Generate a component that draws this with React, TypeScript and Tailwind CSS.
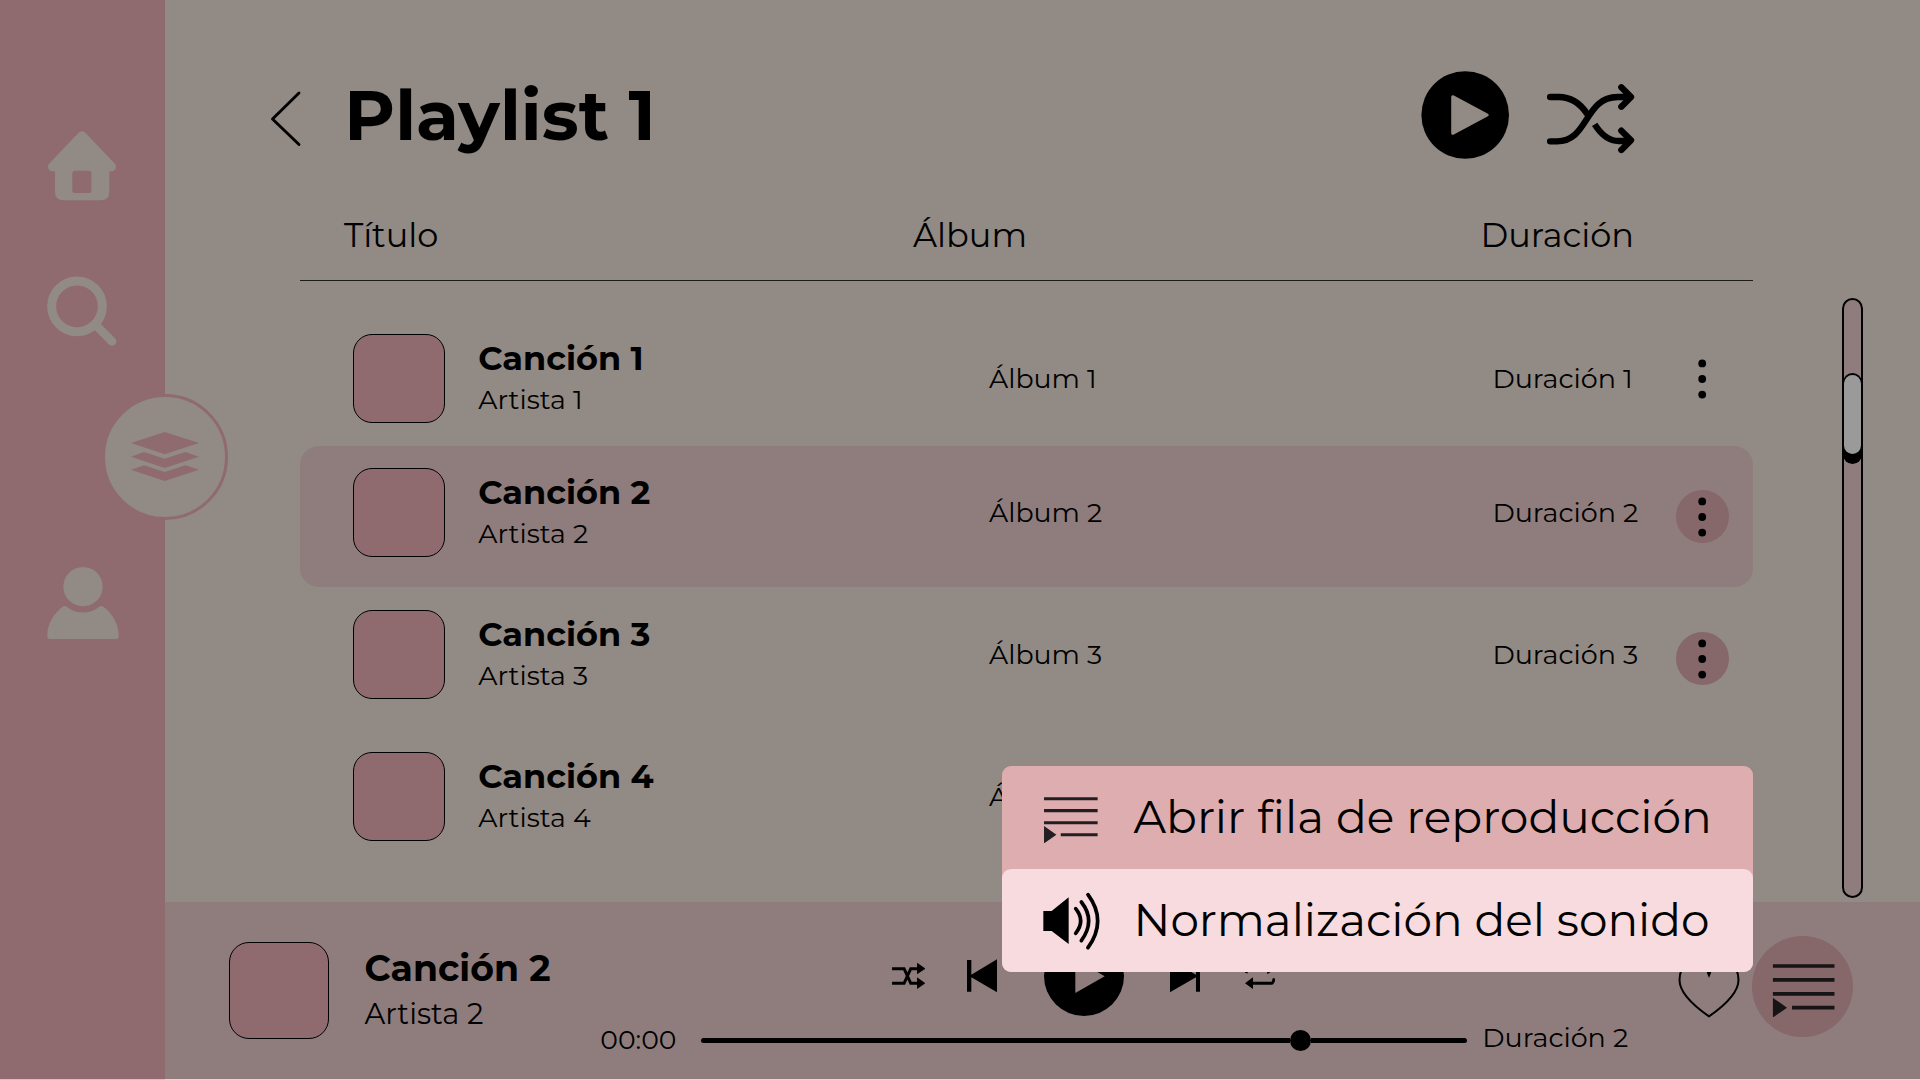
import React from 'react';

type Song = { title: string; artist: string; album: string; duration?: string; menu: 'plain' | 'filled' };

const songs: Song[] = [
  { title: 'Canción 1', artist: 'Artista 1', album: 'Álbum 1', duration: 'Duración 1', menu: 'plain' },
  { title: 'Canción 2', artist: 'Artista 2', album: 'Álbum 2', duration: 'Duración 2', menu: 'filled' },
  { title: 'Canción 3', artist: 'Artista 3', album: 'Álbum 3', duration: 'Duración 3', menu: 'filled' },
  { title: 'Canción 4', artist: 'Artista 4', album: 'Álbum 4', menu: 'filled' },
];

const rowBoxes = ['h-[134px]', 'mb-px h-[141px] rounded-[19px] bg-[#8f7d7d]', 'h-[142px]', 'h-[142px]'];

function HomeIcon() {
  return (
    <svg className="ml-[46.67px] mt-[130px] h-[71.33px] w-[70.67px] shrink-0" viewBox="140 90 212 214" fill="#928a84">
      <path d="M245 108 157 200H333Z" stroke="#928a84" strokeWidth="28" strokeLinejoin="round" />
      <path d="M164 200H327V275Q327 301 301 301H190Q164 301 164 275Z" />
      <rect x="216" y="212" width="57" height="67" rx="7" fill="#8f6b6f" />
    </svg>
  );
}

function SearchIcon() {
  return (
    <svg className="ml-[46.3px] mt-[74px] size-[72px] shrink-0" viewBox="140 526 216 216" fill="none" stroke="#928a84">
      <circle cx="233" cy="620" r="76" strokeWidth="27" />
      <path d="M294 681 338 725" strokeWidth="26" strokeLinecap="round" />
    </svg>
  );
}

function LayersIcon() {
  return (
    <svg className="h-[49px] w-[68px]" viewBox="394 188 204 147" fill="#8f6b6f">
      <path d="M394 221 495 188 598 221 495 255Z" />
      <path d="M394 262 433 248 495 268 557 248 598 262 495 296Z" />
      <path d="M394 301 433 288 495 308 557 288 598 301 495 335Z" />
    </svg>
  );
}

function UserIcon() {
  return (
    <svg className="ml-[46.67px] mt-[46px] h-[73.67px] w-[72px] shrink-0" viewBox="140 588 216 221" fill="#928a84">
      <circle cx="248" cy="650" r="59" />
      <path d="M141 796C141 760 163 728 189 709Q194 706 200 711C228 733 268 733 296 711Q301 706 307 709C334 728 355 760 355 796V800Q355 807 348 807H148Q141 807 141 800Z" />
    </svg>
  );
}

function QueueIcon({ className }: { className: string }) {
  return (
    <svg className={className} viewBox="0 0 186 161" fill="currentColor">
      <path d="M0 0.5H186V11.5H0ZM0 42H186V53H0ZM0 84H186V95H0ZM58 125.5H186V136.5H58ZM0 101 43 131 0 161Z" />
    </svg>
  );
}

function Kebab({ filled }: { filled: boolean }) {
  return (
    <div className={filled ? 'mt-[22px] flex size-[53px] items-center justify-center rounded-full bg-[#86676a]' : 'mt-[18.3px] flex size-[53px] items-center justify-center rounded-full'}>
      <svg className="h-[42px] w-[10px]" viewBox="0 0 10 42">
        <circle cx="5.2" cy="5.4" r="3.9" />
        <circle cx="5.2" cy="21" r="3.9" />
        <circle cx="5.2" cy="36.6" r="3.9" />
      </svg>
    </div>
  );
}

function SongRow({ song, box }: { song: Song; box: string }) {
  return (
    <div className={`${box} grid shrink-0 grid-cols-[125.2px_510.8px_503.400px_183.400px_53px] items-start pl-[53px] pt-[22px]`}>
      <div className="h-[89px] w-[92px] rounded-[19px] border border-black bg-[#8f6b6f]" />
      <div className="pt-[6px]">
        <div className="text-[33.5px] font-bold leading-[36px]">{song.title}</div>
        <div className="mt-[8px] text-[26.8px] leading-[32px]">{song.artist}</div>
      </div>
      <div className="mt-[29px] text-[26.8px] leading-[32px]">{song.album}</div>
      <div className="mt-[29px] text-[27px] leading-[32px]">{song.duration}</div>
      <Kebab filled={song.menu === 'filled'} />
    </div>
  );
}

function Header() {
  return (
    <header className="flex h-[214.5px] shrink-0 items-start">
      <svg className="ml-[103px] mt-[89px] h-[60px] w-[36px]" viewBox="268 89 36 60" fill="none" stroke="#000" strokeWidth="2.9" strokeLinecap="round" strokeLinejoin="round">
        <path d="M299 93 272.500 119 299 144.500" />
      </svg>
      <h1 className="ml-[40.3px] mt-[75px] w-[1076.7px] text-[69.5px] font-bold leading-[80px]">Playlist 1</h1>
      <svg className="mt-[71px] size-[88px]" viewBox="0 0 88 88">
        <circle cx="44.200" cy="44" r="43.800" />
        <path d="M31.700 25.700 66.200 44 31.700 62.300Z" fill="#928a84" stroke="#928a84" strokeWidth="3" strokeLinejoin="round" />
      </svg>
      <svg className="ml-[37.7px] mt-[83.3px] h-[71.67px] w-[90px]" viewBox="500 100 270 215" fill="none" stroke="#000" strokeWidth="19" strokeLinecap="round" strokeLinejoin="round">
        <path d="M509 275H530C625 275 612 142 712 142H750" />
        <path d="M509 142H535C572 142 600 162 620 192" />
        <path d="M643 224C662 254 685 274 715 274H750" strokeLinecap="butt" />
        <path d="M723 113 752 142 723 171M723 243 752 272 723 301" />
      </svg>
    </header>
  );
}

function Scrollbar() {
  return (
    <div className="ml-[89.3px] mt-[18.3px] h-[600px] w-[20.7px] rounded-full border-2 border-black bg-[#8f7d7d]">
      <div className="-mx-[1.5px] mt-[72.7px] h-[91px] rounded-full bg-black px-[1px] pt-[2px]">
        <div className="h-[79px] rounded-full bg-[#9a9a9a]" />
      </div>
    </div>
  );
}

function Controls() {
  return (
    <div className="flex h-[80px] items-center pl-[291.7px]">
      <svg className="h-[28px] w-[33.5px]" viewBox="156 186 100 84" fill="none" stroke="#000" strokeWidth="9">
        <path d="M156 206H192L212 250H236M156 250H192L212 206H236" />
        <path d="M231 188 256 206 231 223ZM231 232 256 250 231 267Z" fill="#000" stroke="none" />
      </svg>
      <svg className="ml-[41.5px] h-[34px] w-[30px]" viewBox="381 177 90 102">
        <path d="M381 180H394V224L471 178V277L394 232V275H381Z" />
      </svg>
      <svg className="ml-[46.7px] size-[80px]" viewBox="0 0 240 240">
        <circle cx="120" cy="120" r="120" />
        <path d="M94 70 182 121 94 171Z" fill="#8f7d7d" />
      </svg>
      <svg className="ml-[46.3px] h-[34px] w-[30.3px]" viewBox="990 177 91 102">
        <path d="M990 178 1068 224V180H1081V275H1068V232L990 277Z" />
      </svg>
      <svg className="ml-[44.7px] h-[28px] w-[30.3px]" viewBox="1215 186 91 84" fill="none" stroke="#000" strokeWidth="9">
        <path d="M1236 250H1296Q1299 250 1303 235M1285 206H1225Q1222 206 1218 219" />
        <path d="M1215 250 1239 232V267ZM1306 206 1282 188V223Z" fill="#000" stroke="none" />
      </svg>
    </div>
  );
}

function Progress() {
  return (
    <div className="flex items-start">
      <div className="mt-[8.3px] w-[100.7px] text-[26.6px] leading-[32px]">00:00</div>
      <div className="mt-[14px] flex h-[21px] w-[766px] items-center">
        <div className="h-[4.7px] w-[589px] rounded-l-full bg-black" />
        <div className="size-[21px] rounded-full bg-black" />
        <div className="h-[4.7px] flex-1 rounded-r-full bg-black" />
      </div>
      <div className="ml-[15.3px] mt-[6.3px] text-[27px] leading-[32px]">Duración 2</div>
    </div>
  );
}

function Player() {
  return (
    <footer className="flex h-[178px] shrink-0 items-start border-b border-[#f0d2d5] bg-[#8f7d7d]">
      <div className="ml-[64px] mt-[40px] h-[97px] w-[99.500px] shrink-0 rounded-[20px] border border-black bg-[#8f6b6f]" />
      <div className="ml-[36px] mt-[45.7px] w-[235.8px] shrink-0">
        <div className="text-[36.2px] font-bold leading-[40px]">Canción 2</div>
        <div className="mt-[9.3px] text-[29px] leading-[34px]">Artista 2</div>
      </div>
      <div className="mt-[33.7px] w-[1076.4px] shrink-0">
        <Controls />
        <Progress />
      </div>
      <svg className="mt-[54.7px] h-[61.67px] w-[64px] shrink-0" viewBox="710 650 192 185" fill="none" stroke="#000" strokeWidth="6">
        <path d="M806 828C760 796 717 757 717.500 718C718 672 758 655 784 668C798 676 805 692 806 706C807 692 814 676 828 668C854 655 894 672 894.500 718C895 757 852 796 806 828Z" />
        <path d="M798 692H814L806 713Z" fill="#000" stroke="none" />
      </svg>
      <div className="ml-[10.9px] mt-[33.8px] flex size-[101.400px] shrink-0 items-center justify-center rounded-full bg-[#86676a] pt-[8px] text-[#171415]">
        <QueueIcon className="h-[53.67px] w-[62px] translate-x-[1.7px]" />
      </div>
    </footer>
  );
}

function QueueMenu() {
  return (
    <div className="absolute left-[1002px] top-[766px] z-20 h-[206px] w-[751px] rounded-[9px] bg-[#deadaf]">
      <div className="flex h-[103px] items-start pl-[42px]">
        <QueueIcon className="mt-[31px] h-[46.4px] w-[53.67px] text-[#231f20]" />
        <div className="ml-[35.8px] mt-[21.3px] whitespace-nowrap text-[45.5px] leading-[60px]">Abrir fila de reproducción</div>
      </div>
      <div className="flex h-[103px] items-start rounded-[9px] bg-[#f7dbdf] pl-[39.7px]">
        <svg className="mt-[22.7px] h-[58.33px] w-[60px]" viewBox="155 425 180 175">
          <path d="M159 482H184L235 441V581L184 542H159Z" />
          <g fill="none" stroke="#000" strokeWidth="11" strokeLinecap="round">
            <path d="M256 475Q286 511 256 549" />
            <path d="M273 455Q317 511 273 571" />
            <path d="M293 433Q351 511 293 592" />
          </g>
        </svg>
        <div className="ml-[31.8px] mt-[21.3px] whitespace-nowrap text-[45.4px] leading-[60px]">Normalización del sonido</div>
      </div>
    </div>
  );
}

export default function App() {
  return (
    <div className="relative flex h-[1080px] w-[1920px] overflow-hidden bg-[#928a84] font-['Montserrat','Inter',sans-serif] text-black">
      <nav className="z-10 flex w-[165px] shrink-0 flex-col border-b border-[#efb3ba] bg-[#8f6b6f]">
        <HomeIcon />
        <SearchIcon />
        <div className="ml-[102.3px] mt-[46.67px] flex size-[126px] shrink-0 items-center justify-center rounded-full border-[3px] border-[#8f6b6f] bg-[#928a84]">
          <LayersIcon />
        </div>
        <UserIcon />
      </nav>
      <main className="flex w-[1755px] flex-col">
        <Header />
        <div className="flex h-[65.5px] shrink-0 text-[33.6px] leading-[40px]">
          <div className="ml-[179px] w-[569px]">Título</div>
          <div className="w-[567.4px]">Álbum</div>
          <div>Duración</div>
        </div>
        <div className="flex h-[622px] shrink-0">
          <div className="ml-[135px] flex w-[1453px] flex-col border-t border-[#1c1c18] pt-[31px]">
            {songs.map((song, i) => (
              <SongRow key={song.title} song={song} box={rowBoxes[i]} />
            ))}
          </div>
          <Scrollbar />
        </div>
        <Player />
      </main>
      <QueueMenu />
    </div>
  );
}
